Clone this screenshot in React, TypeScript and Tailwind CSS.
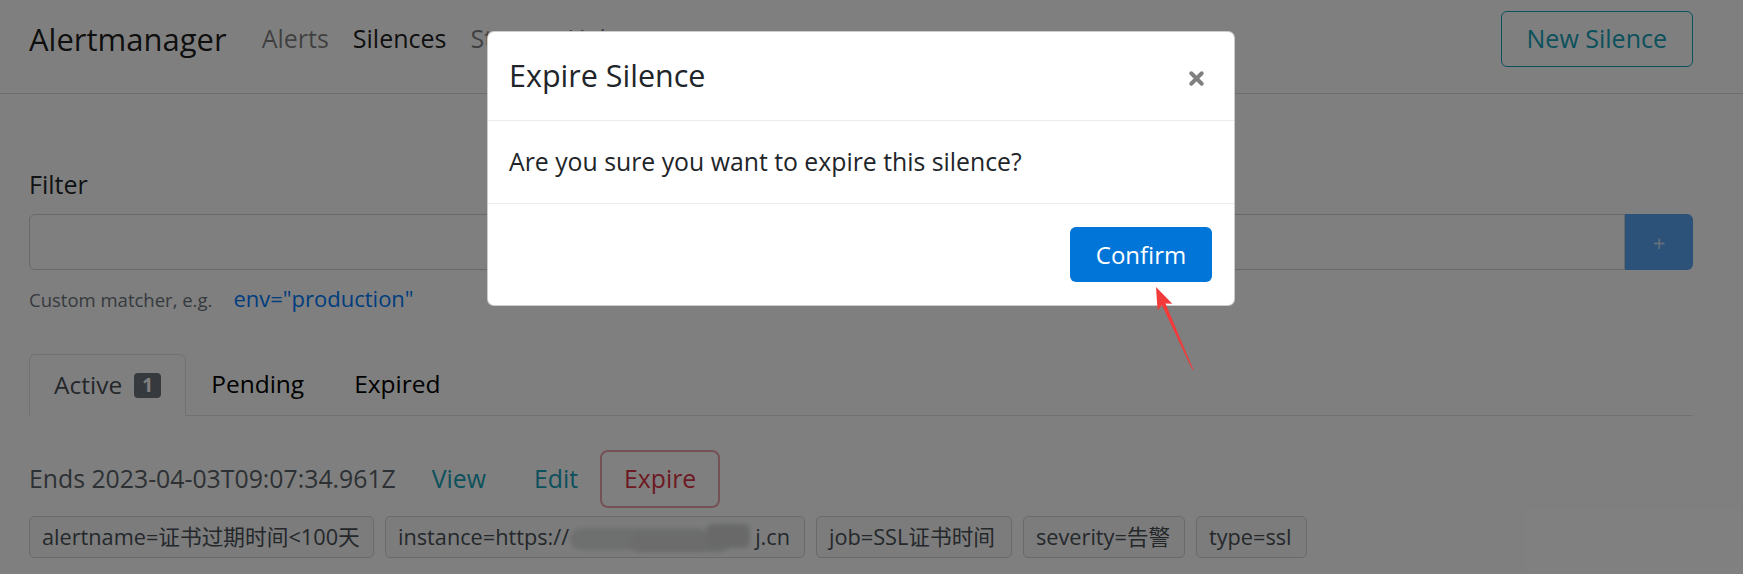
import { X } from 'lucide-react';

const font = { fontFamily: '"Open Sans", "Noto Sans CJK SC", sans-serif' };

const matchers = [
    { label: 'alertname=证书过期时间<100天', width: 'w-[345px]' },
    { label: 'instance=https://', blurred: true, tail: 'j.cn', width: 'w-[420px]' },
    { label: 'job=SSL证书时间', width: 'w-[196px]' },
    { label: 'severity=告警', width: 'w-[162px]' },
    { label: 'type=ssl', width: 'w-[111px]' },
];

function Navbar() {
    return (
        <header className="border-b border-[#dadada] pt-[11px] pb-[26px] pl-[29px] pr-[50px]">
            <div className="flex h-[56px] items-center">
                <span className="text-[31px] text-black/90">Alertmanager</span>
                <nav className="ml-[35px] flex items-center gap-[24px] text-[25px]">
                    <a className="text-black/50">Alerts</a>
                    <a className="text-black/90">Silences</a>
                    <a className="text-black/50">Status</a>
                    <a className="text-black/50">Help</a>
                </nav>
                <button className="ml-auto h-[56px] rounded-[6px] border border-[#17a2b8] px-[25px] text-[25px] text-[#17a2b8]">
                    New Silence
                </button>
            </div>
        </header>
    );
}

function Filter() {
    return (
        <div className="pt-[72px]">
            <label className="block text-[25px] leading-[36px] text-[#212529]">Filter</label>
            <div className="mt-[12px] flex h-[56px]">
                <input className="flex-1 rounded-l-[6px] border border-[#ced4da] bg-white" />
                <button className="w-[68px] rounded-r-[6px] bg-[#5aa5f2] text-[22px] text-white/70">+</button>
            </div>
            <p className="mt-[14px] text-[18.5px] leading-[28px] text-[#6c757d]">
                Custom matcher, e.g.
                <span className="ml-[21px] text-[22px] text-[#007bff]">env="production"</span>
            </p>
        </div>
    );
}

function Tabs() {
    return (
        <div className="mt-[40px] flex h-[62px] border-b border-[#dee2e6] text-[24.5px]">
            <div className="-mb-px flex items-center rounded-t-[6px] border border-b-white border-[#dee2e6] bg-white px-[24px] text-[#495057]">
                Active
                <span className="ml-[12px] flex h-[25px] w-[27px] items-center justify-center rounded-[4px] bg-[#6c757d] text-[19px] font-bold text-white">1</span>
            </div>
            <div className="flex items-center px-[25px] text-black">Pending</div>
            <div className="flex items-center px-[25px] text-black">Expired</div>
        </div>
    );
}

function SilenceRow() {
    return (
        <div className="pt-[34px]">
            <div className="flex h-[58px] items-center text-[24.8px]">
                <span className="text-[#5a6268]">Ends 2023-04-03T09:07:34.961Z</span>
                <a className="ml-[36px] text-[#17a2b8]">View</a>
                <a className="ml-[48px] text-[#17a2b8]">Edit</a>
                <button className="ml-[22px] h-[58px] rounded-[8px] border-2 border-[#e6a3a8] px-[22px] text-[#dc3545]">
                    Expire
                </button>
            </div>
            <div className="mt-[8px] flex gap-[11px]">
                {matchers.map((m) => (
                    <span
                        key={m.label}
                        className={`flex h-[42px] items-center rounded-[5px] border border-[#d2d4d6] bg-[#f8f9fa] px-[12px] text-[21.7px] whitespace-nowrap text-[#495057] ${m.width}`}
                    >
                        {m.label}
                        {m.blurred && (
                            <span className="relative mx-[1px] h-[30px] w-[184px] shrink-0">
                                <span className="absolute top-[6px] left-0 h-[22px] w-[138px] rounded-full bg-[#dddedf] blur-[2px]" />
                                <span className="absolute top-[10px] left-[60px] h-[20px] w-[100px] rounded-full bg-[#d8d9da] blur-[2px]" />
                                <span className="absolute top-[2px] left-[136px] h-[24px] w-[44px] rounded-[6px] bg-[#d2d3d4] blur-[2px]" />
                            </span>
                        )}
                        {m.tail}
                    </span>
                ))}
            </div>
        </div>
    );
}

function ExpireModal() {
    return (
        <div className="absolute top-[31px] left-[487px] w-[748px] rounded-[7px] border border-black/20 bg-white">
            <div className="flex h-[89px] items-center justify-between border-b border-[#e9ecef] pr-[27px] pl-[21px]">
                <h5 className="text-[30.5px] text-[#212529]">Expire Silence</h5>
                <X className="mt-[4px] h-[21px] w-[21px] text-[#808080]" strokeWidth={4.5} />
            </div>
            <div className="flex h-[83px] items-center border-b border-[#e9ecef] pl-[21px] text-[24.8px] text-[#212529]">
                Are you sure you want to expire this silence?
            </div>
            <div className="flex h-[101px] items-center justify-end pr-[22px]">
                <button className="h-[55px] w-[142px] rounded-[6px] bg-[#0275d8] text-[24px] text-white">Confirm</button>
            </div>
        </div>
    );
}

function Arrow() {
    return (
        <svg className="absolute top-[280px] left-[1140px]" width="60" height="100" viewBox="0 0 60 100">
            <polygon
                points="16,7 17.6,30.4 21.9,25.2 52.6,90.2 53.4,89.8 25.5,23.6 32.3,23.8"
                fill="#f23a3a"
            />
        </svg>
    );
}

export default function App() {
    return (
        <div className="relative h-[574px] overflow-hidden bg-white" style={font}>
            <Navbar />
            <main className="pl-[29px] pr-[50px]">
                <Filter />
                <Tabs />
                <SilenceRow />
            </main>
            <div className="absolute inset-0 bg-black/50" />
            <ExpireModal />
            <Arrow />
        </div>
    );
}
